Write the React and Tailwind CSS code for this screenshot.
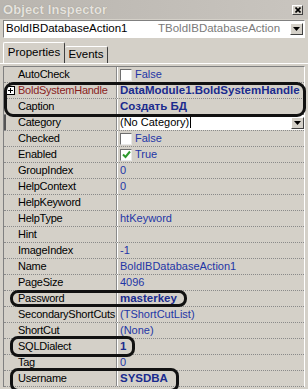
import React from 'react';

const blue = 'text-[#1f36a6]';
const bold = 'font-bold text-[#1a2b8e] text-[11.5px]';

function Check({ checked, label }) {
  return (
    <div className="flex items-center gap-[3px]">
      <span className="flex h-[12px] w-[12px] items-center justify-center border border-t-[#6e6e6e] border-l-[#6e6e6e] border-b-[#e8e8e8] border-r-[#e8e8e8] bg-white">
        {checked && (
          <svg width="9" height="9" viewBox="0 0 9 9">
            <path d="M1 4.5 L3.5 7 L8 1.5" stroke="#2e9a2e" strokeWidth="2" fill="none" />
          </svg>
        )}
      </span>
      <span className={blue}>{label}</span>
    </div>
  );
}

function DropBtn() {
  return (
    <span className="flex h-[12px] w-[13px] items-center justify-center border border-t-white border-l-white border-b-[#404040] border-r-[#404040] bg-[#d4d0c8]">
      <svg width="7" height="4" viewBox="0 0 7 4">
        <path d="M0 0 H7 L3.5 4 Z" fill="#000" />
      </svg>
    </span>
  );
}

const rows = [
  { name: 'AutoCheck', value: <Check label="False" /> },
  { name: 'BoldSystemHandle', plus: true, value: <span className={bold}>DataModule1.BoldSystemHandle</span> },
  { name: 'Caption', value: <span className={bold}>Создать БД</span> },
  { name: 'Category', selected: true },
  { name: 'Checked', value: <Check label="False" /> },
  { name: 'Enabled', value: <Check checked label="True" /> },
  { name: 'GroupIndex', value: <span className={blue}>0</span> },
  { name: 'HelpContext', value: <span className={blue}>0</span> },
  { name: 'HelpKeyword', value: null },
  { name: 'HelpType', value: <span className={blue}>htKeyword</span> },
  { name: 'Hint', value: null },
  { name: 'ImageIndex', value: <span className={blue}>-1</span> },
  { name: 'Name', value: <span className={blue}>BoldIBDatabaseAction1</span> },
  { name: 'PageSize', value: <span className={blue}>4096</span> },
  { name: 'Password', value: <span className={bold}>masterkey</span> },
  { name: 'SecondaryShortCuts', value: <span className={blue}>(TShortCutList)</span> },
  { name: 'ShortCut', value: <span className={blue}>(None)</span> },
  { name: 'SQLDialect', value: <span className={bold}>1</span> },
  { name: 'Tag', value: <span className={blue}>0</span> },
  { name: 'Username', value: <span className={bold}>SYSDBA</span> },
];

function Row({ row }) {
  return (
    <div className="flex h-[16px] border-b border-dotted border-[#8a8a8a] leading-[15px]">
      <div
        className={
          'relative flex w-[113px] shrink-0 items-center overflow-hidden whitespace-nowrap border-r border-[#8a8a8a] tracking-[-0.25px] ' +
          (row.selected ? 'border-l-2 border-l-[#555] pl-[12px]' : 'pl-[14px]')
        }
      >
        {row.plus && (
          <span className="absolute left-[2px] top-[3px] flex h-[9px] w-[9px] items-center justify-center border border-black bg-white">
            <svg width="5" height="5" viewBox="0 0 5 5">
              <path d="M0 2.5 H5 M2.5 0 V5" stroke="#000" strokeWidth="1" />
            </svg>
          </span>
        )}
        <span className={row.plus ? 'text-[#8a1e1e]' : 'text-black'}>{row.name}</span>
      </div>
      <div className="flex flex-1 items-center overflow-hidden whitespace-nowrap border-l border-white pl-[2px]">
        {row.selected ? (
          <div className="flex h-full flex-1 items-center bg-white">
            <span className="text-black">(No Category)</span>
            <span className="ml-[1px] h-[11px] w-[1px] bg-black" />
            <span className="flex-1" />
            <DropBtn />
          </div>
        ) : (
          row.value
        )}
      </div>
    </div>
  );
}

export default function App() {
  return (
    <div
      className="relative h-[389px] w-[308px] overflow-hidden bg-[#d4d0c8] text-[11px] text-black"
      style={{ fontFamily: '"Liberation Sans", Arial, sans-serif' }}
    >
      {/* Title bar */}
      <div className="flex h-[19px] items-center justify-between bg-gradient-to-r from-[#b9b5af] to-[#c9c5bf] pl-[3px] pr-[5px]">
        <span className="text-[13px] font-bold tracking-[0.1px] text-[#e6e3de] [text-shadow:0_0_1px_#8c8883]">
          Object Inspector
        </span>
        <span className="flex h-[10px] w-[11px] items-center justify-center border border-t-white border-l-white border-b-[#404040] border-r-[#404040] bg-[#d4d0c8]">
          <svg width="6" height="6" viewBox="0 0 6 6">
            <path d="M0.5 0.5 L5.5 5.5 M5.5 0.5 L0.5 5.5" stroke="#000" strokeWidth="1.6" />
          </svg>
        </span>
      </div>

      {/* Object selector */}
      <div className="mx-[3px] mt-[1px] flex h-[18px] items-center border border-t-[#808080] border-l-[#808080] border-b-white border-r-white bg-white pl-[2px] pr-[1px]">
        <span className="w-[152px] text-[11.5px]">BoldIBDatabaseAction1</span>
        <span className="flex-1 text-[11.5px] text-[#7a7a7a]">TBoldIBDatabaseAction</span>
        <DropBtn />
      </div>

      {/* Tabs */}
      <div className="mt-[4px] flex h-[22px] items-end border-b border-white px-[3px]">
        <div className="flex h-[21px] w-[62px] items-center justify-center rounded-t-[2px] border-l border-t border-r border-l-white border-t-white border-r-[#404040] text-[11.5px]">
          Properties
        </div>
        <div className="flex h-[17px] w-[43px] items-center justify-center rounded-t-[2px] border-t border-r border-t-white border-r-[#404040] text-[11.5px]">
          Events
        </div>
      </div>

      {/* Grid */}
      <div className="mx-[3px] mt-[2px] border-l border-t border-r border-l-[#808080] border-t-[#808080] border-r-white">
        {rows.map((r) => (
          <Row key={r.name} row={r} />
        ))}
      </div>

      {/* Hand-drawn highlights */}
      <div className="absolute left-[4px] top-[82px] h-[35px] w-[302px] rounded-[9px] border-[3px] border-[#111]" />
      <div className="absolute left-[10px] top-[290px] h-[17px] w-[177px] rounded-[8px] border-[3px] border-[#111]" />
      <div className="absolute left-[10px] top-[336px] h-[21px] w-[125px] rounded-[8px] border-[3px] border-[#111]" />
      <div className="absolute left-[10px] top-[368px] h-[24px] w-[169px] rounded-[8px] border-[3px] border-[#111]" />
    </div>
  );
}
